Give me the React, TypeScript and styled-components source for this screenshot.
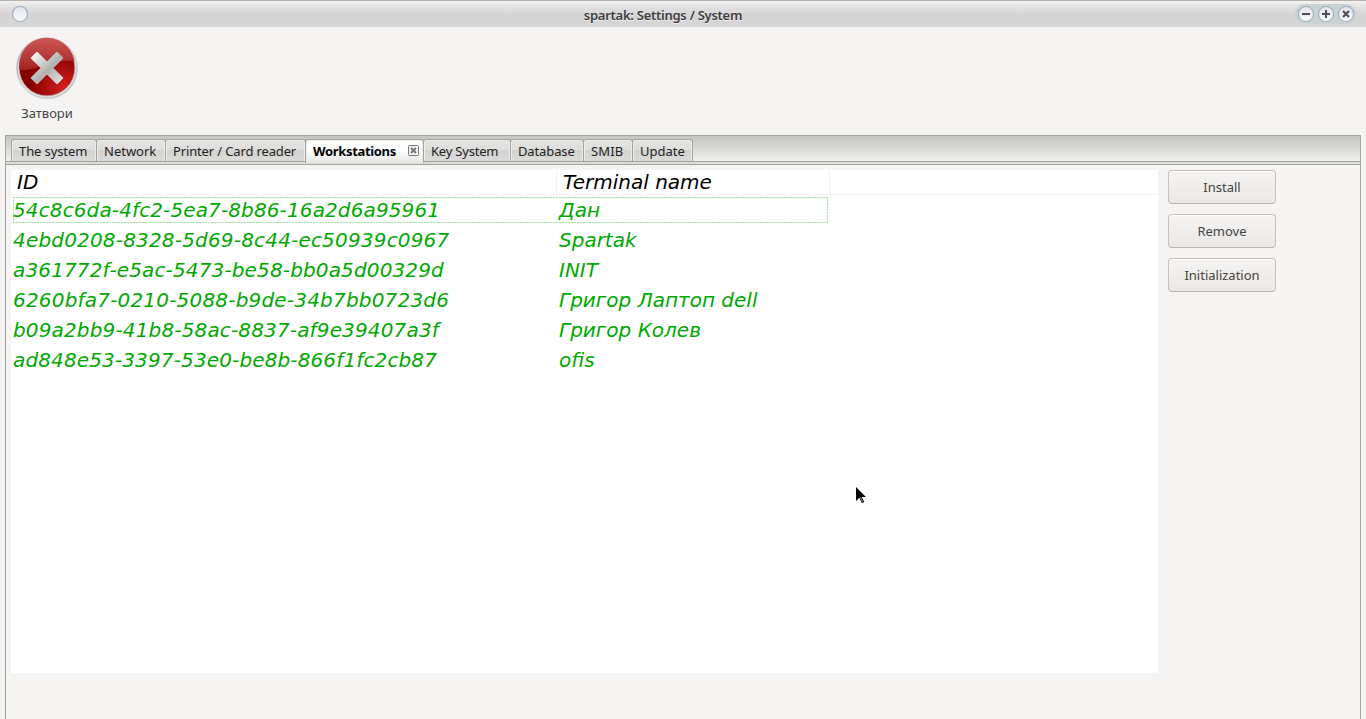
import React from "react";
import styled, { createGlobalStyle } from "styled-components";

const GlobalStyle = createGlobalStyle`
  * { box-sizing: border-box; }
  html, body { margin: 0; background: #f5f4f2; overflow: hidden; }
  body { font-family: "Noto Sans", sans-serif; font-size: 13px; color: #1a1a1a; }
`;

const Window = styled.div`
  position: relative;
  width: 1366px;
  height: 719px;
  display: flex;
  flex-direction: column;
  overflow: hidden;
`;

const TitleBar = styled.header`
  height: 27px;
  flex: none;
  display: grid;
  grid-template-columns: 40px 1fr 80px;
  align-items: center;
  padding: 0 10px;
  border-top: 1px solid #b8b0a8;
  background: linear-gradient(#f2f2f2 0, #e3e3e3 5px, #d4d4d4 14px, #d5d5d5 100%);
`;

const Title = styled.h1`
  margin: 0;
  padding: 2px 0 0 0;
  text-align: center;
  font-size: 13px;
  line-height: 18px;
  font-weight: 600;
  letter-spacing: -0.26px;
  color: #3d3d3d;
  text-shadow: 0 1px 0 #eee;
`;

const WindowButtons = styled.div`
  display: flex;
  justify-content: flex-end;
  width: 61px;
  justify-self: end;
  border-radius: 10px;
  background: #c9d3d2;
`;

const RoundIcon = styled.svg`
  display: block;
  width: 20px;
  height: 20px;
`;

const Toolbar = styled.div`
  height: 108px;
  flex: none;
  padding: 9px 0 0 15px;
`;

const ToolItem = styled.button`
  display: flex;
  flex-direction: column;
  align-items: center;
  width: 64px;
  padding: 0;
  border: 0;
  background: none;
  font: inherit;
  color: #444;
  line-height: 18px;
`;

const ToolGlyph = styled.svg`
  display: block;
  width: 64px;
  height: 64px;
  margin-bottom: 4px;
`;

const Notebook = styled.section`
  flex: 1;
  display: flex;
  flex-direction: column;
  margin: 0 5px;
  border: 1px solid #a2a29f;
  border-bottom: 0;
`;

const TabStrip = styled.nav`
  height: 29px;
  flex: none;
  display: flex;
  align-items: flex-start;
  padding: 3px 0 0 5px;
  border-bottom: 1px solid #a2a29f;
  background: linear-gradient(#a2a29f, #a2a29f) 0 25px / 100% 1px no-repeat,
    linear-gradient(#dededc, #dededc) 0 26px / 100% 3px no-repeat,
    linear-gradient(#c4c4c1 0, #efefed 25px);
`;

const Tab = styled.div<{ $width: number; $tracking: number; $active?: boolean }>`
  width: ${(p) => p.$width}px;
  height: ${(p) => (p.$active ? 24 : 22)}px;
  flex: none;
  display: flex;
  align-items: center;
  justify-content: space-between;
  padding: 1px 4px ${(p) => (p.$active ? 2 : 0)}px 7px;
  border: 1px solid #a2a29f;
  border-bottom: 0;
  border-radius: 3px 3px 0 0;
  line-height: 18px;
  white-space: nowrap;
  letter-spacing: ${(p) => p.$tracking}px;
  font-weight: ${(p) => (p.$active ? 700 : 400)};
  color: ${(p) => (p.$active ? "#000" : "#222")};
  box-shadow: inset 1px 1px 0 #ededeb, inset -1px 0 0 #ededeb;
  background: ${(p) =>
    p.$active
      ? "linear-gradient(#fff 0, #fff 10px, #e2e2e0 24px)"
      : "linear-gradient(#e3e3e1 0, #dededc 10px, #d2d2cf 10px, #dcdcda 22px)"};

  & + & {
    margin-left: -1px;
  }
`;

const CloseBox = styled.svg`
  width: 11px;
  height: 11px;
  margin-top: -1px;
`;

const Page = styled.div`
  flex: 1;
  display: flex;
  align-items: flex-start;
  gap: 10px;
  padding: 5px 0 0 5px;
`;

const List = styled.div`
  width: 1147px;
  height: 503px;
  background: #fff;
  font-family: "DejaVu Sans", sans-serif;
  font-style: italic;
  font-size: 20px;
`;

const HeaderRow = styled.div`
  height: 25px;
  display: flex;
  border-bottom: 1px solid #f1f1f0;
`;

const HeaderCell = styled.div<{ $width: number }>`
  width: ${(p) => p.$width}px;
  padding-left: 6px;
  border-right: 1px solid #f1f1f0;
  line-height: 24px;
  color: #000;
`;

const Rows = styled.div`
  padding: 0 0 0 2px;
`;

const Row = styled.div`
  height: 30px;
  display: flex;
  align-items: center;
  color: #00a800;
  line-height: 26px;
`;

const RowFrame = styled.div<{ $focused: boolean }>`
  width: 815px;
  height: 26px;
  display: flex;
  background: ${(p) =>
    p.$focused
      ? `repeating-linear-gradient(90deg, #a8dfa8 0 2px, #e4f6e4 2px 3px) 0 0 / 100% 1px no-repeat,
         repeating-linear-gradient(90deg, #a8dfa8 0 2px, #e4f6e4 2px 3px) 0 100% / 100% 1px no-repeat,
         repeating-linear-gradient(#a8dfa8 0 2px, #e4f6e4 2px 3px) 0 0 / 1px 100% no-repeat,
         repeating-linear-gradient(#a8dfa8 0 2px, #e4f6e4 2px 3px) 100% 0 / 1px 100% no-repeat`
      : "none"};
`;

const Cell = styled.span<{ $width: number; $tracking?: number }>`
  width: ${(p) => p.$width}px;
  flex: none;
  white-space: nowrap;
  ${(p) => (p.$tracking ? `letter-spacing: ${p.$tracking}px;` : "")}
`;

const Actions = styled.aside`
  display: flex;
  flex-direction: column;
  gap: 10px;
`;

const ActionButton = styled.button`
  width: 108px;
  height: 34px;
  padding: 0 0 1px;
  border: 1px solid #c5c1bc;
  border-bottom-color: #bcb4ad;
  border-radius: 4px;
  background: linear-gradient(#f5f4f3, #e9e8e7);
  box-shadow: inset 0 1px 0 #fff;
  font: inherit;
  line-height: 18px;
  color: #444;
`;

const Pointer = styled.svg`
  position: absolute;
  left: 854px;
  top: 485px;
  width: 14px;
  height: 22px;
`;

const tabs = [
  { label: "The system", width: 86, tracking: -0.1 },
  { label: "Network", width: 70, tracking: 0 },
  { label: "Printer / Card reader", width: 141, tracking: -0.14 },
  { label: "Workstations", width: 119, tracking: -0.34, active: true },
  { label: "Key System", width: 88, tracking: -0.2 },
  { label: "Database", width: 74, tracking: -0.12 },
  { label: "SMIB", width: 50, tracking: 0.1 },
  { label: "Update", width: 61, tracking: 0 },
];

const stations = [
  { id: "54c8c6da-4fc2-5ea7-8b86-16a2d6a95961", name: "Дан", tracking: 0.12 },
  { id: "4ebd0208-8328-5d69-8c44-ec50939c0967", name: "Spartak", tracking: 0.18 },
  { id: "a361772f-e5ac-5473-be58-bb0a5d00329d", name: "INIT", tracking: 0.14 },
  { id: "6260bfa7-0210-5088-b9de-34b7bb0723d6", name: "Григор Лаптоп dell", tracking: 0.19 },
  { id: "b09a2bb9-41b8-58ac-8837-af9e39407a3f", name: "Григор Колев", tracking: 0.15 },
  { id: "ad848e53-3397-53e0-be8b-866f1fc2cb87", name: "ofis", tracking: 0.13 },
];

const signs = {
  minimize: "M6 10h8",
  maximize: "M6 10h8M10 6v8",
  close: "M7 7l6 6M13 7l-6 6",
};

function TitleCircle({ sign }: { sign?: keyof typeof signs }) {
  return (
    <RoundIcon viewBox="0 0 20 20">
      <defs>
        <linearGradient id="orb" x1="0" y1="0" x2="0" y2="1">
          <stop offset="0" stopColor="#dfe3ea" />
          <stop offset="1" stopColor="#fafbfd" />
        </linearGradient>
      </defs>
      <circle cx="10" cy="10" r="7.6" fill="url(#orb)" stroke="#a9b4c8" strokeWidth="1.4" />
      {sign && <path d={signs[sign]} stroke="#4f4f4f" strokeWidth={sign === "close" ? 2.2 : 2} fill="none" />}
    </RoundIcon>
  );
}

function StopIcon() {
  return (
    <ToolGlyph viewBox="0 0 64 64">
      <defs>
        <linearGradient id="rim" x1="0" y1="0" x2="1" y2="1">
          <stop offset="0" stopColor="#a0a0a0" />
          <stop offset=".5" stopColor="#d8d8d8" />
          <stop offset="1" stopColor="#bdbdbd" />
        </linearGradient>
        <radialGradient id="red" cx=".8" cy=".85" r=".62">
          <stop offset="0" stopColor="#d41e1e" />
          <stop offset="1" stopColor="#860000" />
        </radialGradient>
        <linearGradient id="gloss" x1="0" y1="0" x2="0" y2="1">
          <stop offset="0" stopColor="#cf5858" />
          <stop offset="1" stopColor="#a52020" />
        </linearGradient>
        <linearGradient id="cross" x1="0" y1="0" x2="1" y2="1">
          <stop offset="0" stopColor="#fff" />
          <stop offset=".55" stopColor="#b0b0b0" />
          <stop offset="1" stopColor="#e4e4e4" />
        </linearGradient>
      </defs>
      <circle cx="32" cy="32.3" r="30" fill="#dfdfe1" stroke="url(#rim)" strokeWidth="1.6" />
      <circle cx="32" cy="32" r="27.8" fill="url(#red)" stroke="#b9a5a5" strokeWidth=".6" />
      <path d="M4.5 34A27.6 27.6 0 0 1 59.4 25C40 22 28 33 4.7 34.5z" fill="url(#gloss)" />
      <path
        d="M22 16.5L32 26.5L42 16.5L47.5 22L37.5 32L47.5 42L42 47.5L32 37.5L22 47.5L16.5 42L26.5 32L16.5 22z"
        fill="url(#cross)"
        stroke="url(#cross)"
        strokeWidth="1.5"
        strokeLinejoin="round"
      />
    </ToolGlyph>
  );
}

export default function App() {
  return (
    <>
      <GlobalStyle />
      <Window>
        <TitleBar>
          <TitleCircle />
          <Title>spartak: Settings / System</Title>
          <WindowButtons>
            <TitleCircle sign="minimize" />
            <TitleCircle sign="maximize" />
            <TitleCircle sign="close" />
          </WindowButtons>
        </TitleBar>
        <Toolbar>
          <ToolItem>
            <StopIcon />
            <span>Затвори</span>
          </ToolItem>
        </Toolbar>
        <Notebook>
          <TabStrip>
            {tabs.map((t) => (
              <Tab key={t.label} $width={t.width} $tracking={t.tracking} $active={t.active}>
                <span>{t.label}</span>
                {t.active && (
                  <CloseBox viewBox="0 0 11 11">
                    <rect x=".5" y=".5" width="10" height="10" rx="1" fill="#f4f4f4" stroke="#777" />
                    <path d="M3 3l5 5M8 3l-5 5" stroke="#777" strokeWidth="2" />
                  </CloseBox>
                )}
              </Tab>
            ))}
          </TabStrip>
          <Page>
            <List>
              <HeaderRow>
                <HeaderCell $width={546}>ID</HeaderCell>
                <HeaderCell $width={273}>Terminal name</HeaderCell>
              </HeaderRow>
              <Rows>
                {stations.map((s, i) => (
                  <Row key={s.id}>
                    <RowFrame $focused={i === 0}>
                      <Cell $width={546} $tracking={s.tracking}>{s.id}</Cell>
                      <Cell $width={268}>{s.name}</Cell>
                    </RowFrame>
                  </Row>
                ))}
              </Rows>
            </List>
            <Actions>
              <ActionButton>Install</ActionButton>
              <ActionButton>Remove</ActionButton>
              <ActionButton>Initialization</ActionButton>
            </Actions>
          </Page>
        </Notebook>
        <Pointer viewBox="0 0 14 22">
          <path d="M2 2v14l3.3-3.2 2.6 5.4 2.4-1.2-2.6-5H12z" fill="#000" stroke="#fff" strokeWidth="1.4" paintOrder="stroke" />
          <path d="M6.3 12.4l2.4 5" stroke="#666" strokeWidth="1.4" />
        </Pointer>
      </Window>
    </>
  );
}
